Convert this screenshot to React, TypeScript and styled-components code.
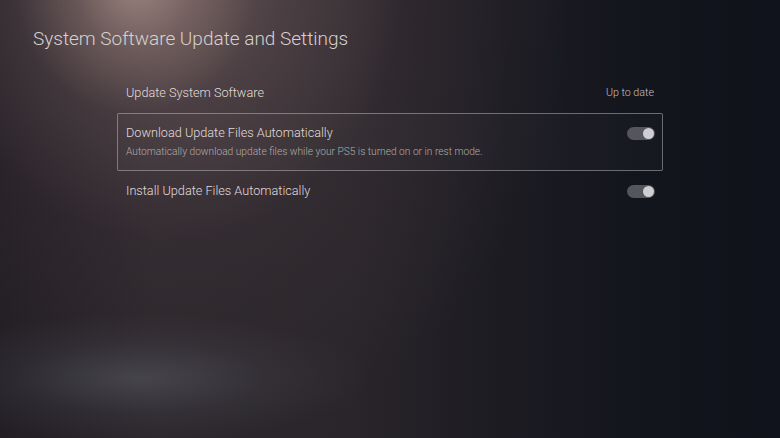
import React from "react";
import styled, { createGlobalStyle } from "styled-components";

const GlobalStyle = createGlobalStyle`
	html, body {
		margin: 0;
		padding: 0;
		background: #15171e;
	}
	* {
		box-sizing: border-box;
	}
`;

const Screen = styled.div`
	width: 780px;
	height: 438px;
	overflow: hidden;
	padding: 27px 0 0 33px;
	font-family: Roboto, "Open Sans", sans-serif;
	background:
		radial-gradient(ellipse 120px 130px at 135px -15px, rgba(175, 150, 142, 0.7) 0%, rgba(150, 125, 120, 0.35) 50%, rgba(120, 100, 100, 0) 100%),
		radial-gradient(ellipse 240px 270px at 165px -30px, rgba(140, 115, 112, 0.55) 0%, rgba(110, 90, 92, 0.3) 50%, rgba(80, 66, 72, 0) 100%),
		radial-gradient(ellipse 380px 430px at 200px 0px, rgba(90, 74, 78, 0.5) 0%, rgba(70, 58, 64, 0.28) 55%, rgba(40, 36, 44, 0) 100%),
		radial-gradient(ellipse 230px 65px at 140px 378px, rgba(88, 90, 98, 0.6) 0%, rgba(72, 72, 82, 0.25) 55%, rgba(40, 40, 48, 0) 100%),
		linear-gradient(90deg, #221e24 0%, #2c272c 20%, #29252a 45%, #1c1b22 65%, #13151d 82%, #10131b 100%);
`;

const Title = styled.h1`
	margin: 0;
	font-size: 19px;
	line-height: 24px;
	font-weight: 300;
	color: #d6d1d0;
`;

const List = styled.div`
	margin: 27px 0 0 84px;
	width: 546px;
	display: flex;
	flex-direction: column;
	gap: 5px;
`;

const Row = styled.div<{ focused?: boolean }>`
	display: flex;
	align-items: ${({ focused }) => (focused ? "flex-start" : "center")};
	justify-content: space-between;
	min-height: 30px;
	padding: ${({ focused }) => (focused ? "11px 7px 11px 8px" : "0 8px 0 9px")};
	border: ${({ focused }) => (focused ? "1px solid rgba(190, 190, 198, 0.5)" : "none")};
	border-radius: 2px;
	background: ${({ focused }) => (focused ? "rgba(255, 255, 255, 0.02)" : "transparent")};
`;

const Label = styled.div`
	display: flex;
	flex-direction: column;
	gap: 4px;
`;

const RowTitle = styled.div`
	font-size: 12.7px;
	line-height: 16px;
	font-weight: 300;
	color: #e0dcdc;
`;

const Description = styled.div`
	font-size: 10.2px;
	line-height: 14px;
	font-weight: 300;
	color: #b0acad;
`;

const Status = styled.span`
	font-size: 10.7px;
	line-height: 16px;
	font-weight: 300;
	color: #c4c2c4;
	margin-right: 1px;
`;

const Toggle = styled.div<{ on: boolean }>`
	position: relative;
	width: 28px;
	height: 13px;
	border-radius: 7px;
	background: #55555d;
	flex-shrink: 0;

	&::after {
		content: "";
		position: absolute;
		top: 1px;
		${({ on }) => (on ? "right: 1px;" : "left: 1px;")}
		width: 11px;
		height: 11px;
		border-radius: 50%;
		background: #cfcfd3;
	}
`;

const ToggleSlot = styled.div`
	padding-top: 2px;
`;

export default function App(): JSX.Element {
	return (
		<>
			<GlobalStyle />
			<Screen>
				<Title>System Software Update and Settings</Title>
				<List>
					<Row>
						<RowTitle>Update System Software</RowTitle>
						<Status>Up to date</Status>
					</Row>
					<Row focused>
						<Label>
							<RowTitle>Download Update Files Automatically</RowTitle>
							<Description>
								Automatically download update files while your PS5 is turned on or in rest mode.
							</Description>
						</Label>
						<ToggleSlot>
							<Toggle on />
						</ToggleSlot>
					</Row>
					<Row>
						<RowTitle>Install Update Files Automatically</RowTitle>
						<Toggle on />
					</Row>
				</List>
			</Screen>
		</>
	);
}
